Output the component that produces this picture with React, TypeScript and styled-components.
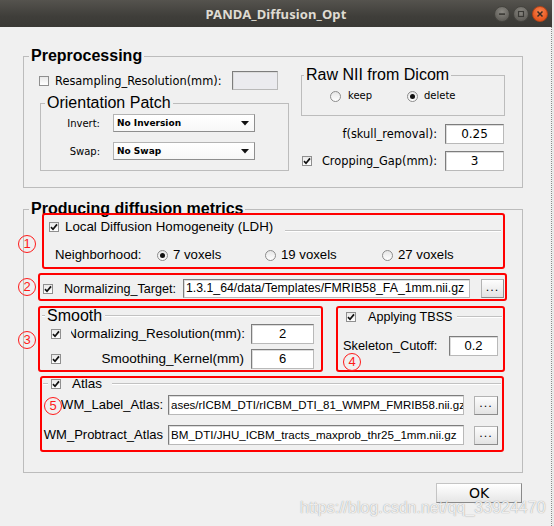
import React from "react";
import styled, { createGlobalStyle } from "styled-components";

const GlobalStyle = createGlobalStyle`
  html, body {
    margin: 0;
    padding: 0;
    background: #f0f0f0;
  }
  body {
    font-family: "Liberation Sans", Arial, sans-serif;
    color: #000;
  }
`;

const Window = styled.div`
  position: relative;
  box-sizing: border-box;
  width: 554px;
  height: 526px;
  padding-right: 2px;
  display: flex;
  flex-direction: column;
  overflow: hidden;
  background: #e9e9e9;
`;

const TitleBar = styled.div`
  flex: none;
  height: 27px;
  display: grid;
  grid-template-columns: 1fr auto 1fr;
  align-items: center;
  background: linear-gradient(#55534e, #3f3e3a 60%, #3a3935);
`;

const Title = styled.div`
  font: bold 13px "Noto Sans", "DejaVu Sans", sans-serif;
  color: #dfdbd2;
  letter-spacing: 0.1px;
`;

const WinButtons = styled.div`
  justify-self: end;
  display: flex;
  gap: 3px;
  padding-right: 4px;
`;

const WinButton = styled.span<{ $close?: boolean }>`
  box-sizing: border-box;
  width: 16px;
  height: 16px;
  border-radius: 50%;
  display: flex;
  align-items: center;
  justify-content: center;
  border: 1px solid ${(p) => (p.$close ? "#b2441a" : "#45443f")};
  background: ${(p) =>
    p.$close
      ? "radial-gradient(circle at 50% 35%, #f88652, #e8571f 70%)"
      : "radial-gradient(circle at 50% 35%, #8b8983, #62605b 70%)"};
`;

const Body = styled.div`
  flex: 1;
  padding: 21px 0 0 23px;
  background: #f0f0f0;
  border-right: 1px dotted #8a8a8a;
`;

const GroupBox = styled.fieldset<{ $w: number; $mt?: number; $ml?: number }>`
  box-sizing: border-box;
  width: ${(p) => p.$w}px;
  min-width: 0;
  margin: ${(p) => p.$mt ?? 0}px 0 0 ${(p) => p.$ml ?? 0}px;
  padding: 0;
  border: 1px solid #bcbcbc;
`;

const GroupTitle = styled.legend<{ $bold?: boolean; $indent: number }>`
  margin-left: ${(p) => p.$indent}px;
  padding: 0 2px;
  font-family: "Liberation Sans", Arial, sans-serif;
  font-size: 16px;
  font-weight: ${(p) => (p.$bold ? "bold" : "normal")};
  line-height: 16px;
  color: #000;
`;

const PreGrid = styled.div`
  display: grid;
  grid-template-columns: 250px 204px;
  column-gap: 12px;
  align-items: start;
  padding: 3px 0 16px 15px;
`;

const Column = styled.div<{ $top?: number }>`
  display: flex;
  flex-direction: column;
  padding-top: ${(p) => p.$top ?? 0}px;
`;

const ResampleRow = styled.div`
  display: flex;
  align-items: center;
  height: 19px;
  padding-right: 11px;
`;

const DvLabel = styled.span<{ $size?: number; $ml?: number; $auto?: boolean }>`
  font-family: "DejaVu Sans", sans-serif;
  font-size: ${(p) => p.$size ?? 11.4}px;
  line-height: 14px;
  white-space: nowrap;
  margin-left: ${(p) => (p.$auto ? "auto" : `${p.$ml ?? 0}px`)};
`;

const Label = styled.span<{ $size?: number; $ml?: number; $w?: number }>`
  font-size: ${(p) => p.$size ?? 13}px;
  line-height: 16px;
  white-space: nowrap;
  flex: none;
  margin-left: ${(p) => p.$ml ?? 0}px;
  ${(p) => (p.$w ? `width: ${p.$w}px;` : "")}
`;

const OrientGrid = styled.div`
  display: grid;
  grid-template-columns: 59px 142px;
  grid-auto-rows: 18px;
  column-gap: 13px;
  row-gap: 10px;
  align-items: center;
  padding: 3px 0 10px 0;
`;

const TinyLabel = styled.span`
  font: 10px "DejaVu Sans", sans-serif;
  text-align: right;
`;

const Dropdown = styled.div`
  box-sizing: border-box;
  height: 18px;
  display: flex;
  align-items: center;
  justify-content: space-between;
  padding: 0 5px 0 3px;
  background: linear-gradient(#ffffff, #f7f7f7);
  border: 1px solid #b4b4b4;
  border-right-color: #8e8e8e;
  border-bottom-color: #8e8e8e;
  font: bold 9px "DejaVu Sans", sans-serif;
`;

const RadioRow = styled.div`
  display: flex;
  align-items: center;
  height: 14px;
  padding: 6px 0 12px 28px;
`;

const RadioItem = styled.span<{ $w?: number; $gap?: number }>`
  display: flex;
  align-items: center;
  gap: ${(p) => p.$gap ?? 6}px;
  flex: none;
  ${(p) => (p.$w ? `width: ${p.$w}px;` : "")}
`;

const RadioCircle = styled.span<{ $on?: boolean }>`
  box-sizing: border-box;
  flex: none;
  width: 11px;
  height: 11px;
  border-radius: 50%;
  border: 1px solid #8c8c8c;
  background: linear-gradient(#e6e6e6, #ffffff);
  display: flex;
  align-items: center;
  justify-content: center;
  &::after {
    content: "";
    display: ${(p) => (p.$on ? "block" : "none")};
    width: 5px;
    height: 5px;
    border-radius: 50%;
    background: #111;
  }
`;

const FieldRow = styled.div<{ $mt: number }>`
  display: flex;
  align-items: center;
  gap: 8px;
  height: 20px;
  margin-top: ${(p) => p.$mt}px;
  padding: 0 1px;
`;

const TextBox = styled.div<{
  $w: number;
  $h?: number;
  $left?: boolean;
  $disabled?: boolean;
  $dv?: boolean;
  $size?: number;
  $ml?: number;
}>`
  box-sizing: border-box;
  flex: none;
  width: ${(p) => p.$w}px;
  height: ${(p) => p.$h ?? 20}px;
  margin-left: ${(p) => (p.$ml === undefined ? "0" : `${p.$ml}px`)};
  padding: 0 2px;
  overflow: hidden;
  white-space: nowrap;
  text-align: ${(p) => (p.$left ? "left" : "center")};
  line-height: ${(p) => (p.$h ?? 20) - 2}px;
  font-family: ${(p) => (p.$dv ? '"DejaVu Sans", sans-serif' : '"Liberation Sans", Arial, sans-serif')};
  font-size: ${(p) => p.$size ?? 13}px;
  background: ${(p) => (p.$disabled ? "#ebebef" : "#ffffff")};
  border: 1px solid #b9b9b9;
  border-top-color: #7d7d7d;
  border-left-color: #7d7d7d;
  box-shadow: inset 1px 1px 0 #dcdcdc;
`;

const Browse = styled.div<{ $w: number; $ml: number }>`
  box-sizing: border-box;
  flex: none;
  width: ${(p) => p.$w}px;
  height: 19px;
  margin-left: ${(p) => p.$ml}px;
  display: flex;
  align-items: center;
  justify-content: center;
  padding-bottom: 3px;
  background: linear-gradient(#fdfdfd, #e3e3e3);
  border: 1px solid #b3b3b3;
  border-right-color: #8c8c8c;
  border-bottom-color: #8c8c8c;
  font: 11px "DejaVu Sans", sans-serif;
  letter-spacing: 1px;
`;

const Metrics = styled.div`
  display: flex;
  flex-direction: column;
  padding-bottom: 20px;
`;

const Callout = styled.div<{ $left?: number; $width: number; $mt: number }>`
  position: relative;
  box-sizing: border-box;
  flex: none;
  width: ${(p) => p.$width}px;
  margin: ${(p) => p.$mt}px 0 0 ${(p) => p.$left ?? 0}px;
  border: 2px solid #ff0000;
  border-radius: 3px;
`;

const Badge = styled.span<{ $x: number; $y: number }>`
  position: absolute;
  left: ${(p) => p.$x}px;
  top: ${(p) => p.$y}px;
  box-sizing: border-box;
  width: 18px;
  height: 18px;
  border: 1.3px solid #ff1a1a;
  border-radius: 50%;
  color: #ff1a1a;
  font: 13px/16px "Liberation Sans", Arial, sans-serif;
  text-align: center;
`;

const Head = styled.div<{ $h: number; $pad?: number; $mt?: number }>`
  display: flex;
  align-items: center;
  height: ${(p) => p.$h}px;
  padding-left: ${(p) => p.$pad ?? 0}px;
  margin-top: ${(p) => p.$mt ?? 0}px;
`;

const Rule = styled.span<{ $ml: number; $mr: number; $top?: number; $w?: number }>`
  flex: ${(p) => (p.$w ? "none" : "1")};
  ${(p) => (p.$w ? `width: ${p.$w}px;` : "")}
  height: 0;
  margin-left: ${(p) => p.$ml}px;
  margin-right: ${(p) => p.$mr}px;
  ${(p) => (p.$top !== undefined ? `align-self: flex-start; margin-top: ${p.$top}px;` : "")}
  border-top: 1px solid #c2c2c2;
  border-bottom: 1px solid #ffffff;
`;

const Row = styled.div<{ $h: number; $mt?: number; $pad?: number }>`
  display: flex;
  align-items: center;
  height: ${(p) => p.$h}px;
  margin-top: ${(p) => p.$mt ?? 0}px;
  padding-left: ${(p) => p.$pad ?? 0}px;
`;

const PairRow = styled.div`
  display: flex;
  margin-top: 5px;
`;

const ClipLabel = styled.span<{ $w: number; $ml: number }>`
  flex: none;
  width: ${(p) => p.$w}px;
  margin-left: ${(p) => p.$ml}px;
  display: flex;
  justify-content: flex-end;
  overflow: hidden;
  white-space: nowrap;
  font-size: 13.5px;
  line-height: 16px;
`;

const RightLabel = styled.span<{ $w: number }>`
  flex: none;
  box-sizing: border-box;
  width: ${(p) => p.$w}px;
  padding-right: 5px;
  text-align: right;
  white-space: nowrap;
  font-size: 13px;
  line-height: 16px;
`;

const Footer = styled.div`
  width: 500px;
  display: flex;
  justify-content: flex-end;
  margin-top: 10px;
`;

const OkButton = styled.div`
  box-sizing: border-box;
  width: 86px;
  height: 20px;
  margin-right: 1px;
  display: flex;
  align-items: center;
  justify-content: center;
  background: linear-gradient(#ffffff, #e6e6e6);
  border: 1px solid #c4c4c4;
  border-right-color: #8a8a8a;
  border-bottom-color: #8a8a8a;
  font: 14px "DejaVu Sans", sans-serif;
`;

const Watermark = styled.div`
  position: absolute;
  left: 300px;
  top: 500px;
  font: 16px/16px "Liberation Sans", Arial, sans-serif;
  color: rgba(255, 255, 255, 0.85);
  text-shadow: 0 0 1px rgba(90, 90, 90, 0.7);
  white-space: nowrap;
  pointer-events: none;
`;

function CheckBox({ on }: { on?: boolean }) {
  return (
    <CheckFrame>
      {on && (
        <svg width="8" height="8" viewBox="0 0 8 8">
          <path d="M1 4.2 L3 6.3 L7 1.4" fill="none" stroke="#111" strokeWidth="1.7" />
        </svg>
      )}
    </CheckFrame>
  );
}

const CheckFrame = styled.span`
  box-sizing: border-box;
  flex: none;
  width: 10px;
  height: 10px;
  display: flex;
  align-items: center;
  justify-content: center;
  border: 1px solid #8f8f8f;
  background: linear-gradient(#e9e9e9, #ffffff);
`;

function Caret() {
  return (
    <svg width="8" height="5" viewBox="0 0 8 5">
      <path d="M0 0 H8 L4 4.5 Z" fill="#111" />
    </svg>
  );
}

export default function App() {
  return (
    <>
      <GlobalStyle />
      <Window>
        <TitleBar>
          <span />
          <Title>PANDA_Diffusion_Opt</Title>
          <WinButtons>
            <WinButton>
              <svg width="8" height="8" viewBox="0 0 8 8">
                <rect x="1" y="3.3" width="6" height="1.6" fill="#3a3935" />
              </svg>
            </WinButton>
            <WinButton>
              <svg width="8" height="8" viewBox="0 0 8 8">
                <rect x="1.5" y="1.5" width="5" height="5" fill="none" stroke="#3a3935" strokeWidth="1.2" />
              </svg>
            </WinButton>
            <WinButton $close>
              <svg width="8" height="8" viewBox="0 0 8 8">
                <path d="M1.5 1.5 L6.5 6.5 M6.5 1.5 L1.5 6.5" stroke="#3a2a22" strokeWidth="1.5" />
              </svg>
            </WinButton>
          </WinButtons>
        </TitleBar>

        <Body>
          <GroupBox $w={500}>
            <GroupTitle $bold $indent={5}>Preprocessing</GroupTitle>
            <PreGrid>
              <Column $top={4}>
                <ResampleRow>
                  <CheckBox />
                  <DvLabel $ml={6}>Resampling_Resolution(mm):</DvLabel>
                  <TextBox $w={46} $h={19} $disabled $ml={10} />
                </ResampleRow>
                <GroupBox $w={249} $mt={5} $ml={1}>
                  <GroupTitle $indent={4}>Orientation Patch</GroupTitle>
                  <OrientGrid>
                    <TinyLabel>Invert:</TinyLabel>
                    <Dropdown>
                      No Inversion
                      <Caret />
                    </Dropdown>
                    <TinyLabel>Swap:</TinyLabel>
                    <Dropdown>
                      No Swap
                      <Caret />
                    </Dropdown>
                  </OrientGrid>
                </GroupBox>
              </Column>

              <Column>
                <GroupBox $w={204}>
                  <GroupTitle $indent={2}>Raw NII from Dicom</GroupTitle>
                  <RadioRow>
                    <RadioItem $w={77} $gap={7}>
                      <RadioCircle />
                      <DvLabel $size={10}>keep</DvLabel>
                    </RadioItem>
                    <RadioItem $gap={6}>
                      <RadioCircle $on />
                      <DvLabel $size={10}>delete</DvLabel>
                    </RadioItem>
                  </RadioRow>
                </GroupBox>
                <FieldRow $mt={8}>
                  <DvLabel $auto>f(skull_removal):</DvLabel>
                  <TextBox $w={59} $dv $size={12}>0.25</TextBox>
                </FieldRow>
                <FieldRow $mt={7}>
                  <CheckBox on />
                  <DvLabel $auto>Cropping_Gap(mm):</DvLabel>
                  <TextBox $w={59} $dv $size={12}>3</TextBox>
                </FieldRow>
              </Column>
            </PreGrid>
          </GroupBox>

          <GroupBox $w={500} $mt={13}>
            <GroupTitle $bold $indent={5}>Producing diffusion metrics</GroupTitle>
            <Metrics>
              <Callout $left={18} $width={463} $mt={-4}>
                <Badge $x={-26} $y={20}>1</Badge>
                <Head $h={16} $pad={5} $mt={4}>
                  <CheckBox on />
                  <Label $ml={6} $size={13.3}>Local Diffusion Homogeneity (LDH)</Label>
                  <Rule $ml={12} $mr={2} $top={11} />
                </Head>
                <Row $h={16} $mt={12} $pad={11} style={{ paddingBottom: 4 }}>
                  <Label $w={102} $size={13.2}>Neighborhood:</Label>
                  <RadioItem $w={108} $gap={5}>
                    <RadioCircle $on />
                    <Label $size={13.2}>7 voxels</Label>
                  </RadioItem>
                  <RadioItem $w={117} $gap={5}>
                    <RadioCircle />
                    <Label $size={13.2}>19 voxels</Label>
                  </RadioItem>
                  <RadioItem $gap={5}>
                    <RadioCircle />
                    <Label $size={13.2}>27 voxels</Label>
                  </RadioItem>
                </Row>
              </Callout>

              <Callout $left={14} $width={469} $mt={4}>
                <Badge $x={-22} $y={3}>2</Badge>
                <Row $h={19} $pad={3} style={{ marginTop: 4, marginBottom: 1 }}>
                  <CheckBox on />
                  <Label $ml={11} $w={119} $size={12.6}>Normalizing_Target:</Label>
                  <TextBox $w={287} $h={19} $left $size={12.3}>
                    1.3.1_64/data/Templates/FMRIB58_FA_1mm.nii.gz
                  </TextBox>
                  <Browse $w={23} $ml={11}>...</Browse>
                </Row>
              </Callout>

              <PairRow>
                <Callout $left={14} $width={285} $mt={0}>
                  <Badge $x={-22} $y={23}>3</Badge>
                  <Head $h={16}>
                    <Rule $ml={2} $mr={0} $w={3} />
                    <Label $size={16} style={{ padding: "0 2px" }}>Smooth</Label>
                    <Rule $ml={1} $mr={1} />
                  </Head>
                  <Row $h={20} $pad={11}>
                    <CheckBox on />
                    <ClipLabel $w={174} $ml={10}>Normalizing_Resolution(mm):</ClipLabel>
                    <TextBox $w={63} $ml={6}>2</TextBox>
                  </Row>
                  <Row $h={20} $mt={5} $pad={11} style={{ paddingBottom: 1 }}>
                    <CheckBox on />
                    <ClipLabel $w={173} $ml={10}>Smoothing_Kernel(mm)</ClipLabel>
                    <TextBox $w={63} $ml={7}>6</TextBox>
                  </Row>
                </Callout>

                <Callout $left={13} $width={169} $mt={0}>
                  <Badge $x={5} $y={45}>4</Badge>
                  <Head $h={18} $pad={8}>
                    <CheckBox on />
                    <Label $ml={12} $size={12.6}>Applying TBSS</Label>
                    <Rule $ml={5} $mr={1} $top={8} />
                  </Head>
                  <Row $h={20} $mt={10} $pad={5}>
                    <Label $w={106} $size={12.8}>Skeleton_Cutoff:</Label>
                    <TextBox $w={49}>0.2</TextBox>
                  </Row>
                </Callout>
              </PairRow>

              <Callout $left={16} $width={464} $mt={4}>
                <Badge $x={2} $y={19}>5</Badge>
                <Head $h={12}>
                  <Rule $ml={1} $mr={0} $w={5} />
                  <span style={{ width: 3 }} />
                  <CheckBox on />
                  <Label $ml={11} $size={13.5}>Atlas</Label>
                  <Rule $ml={10} $mr={1} />
                </Head>
                <Row $h={20} $mt={5}>
                  <RightLabel $w={126}>WM_Label_Atlas:</RightLabel>
                  <TextBox $w={296} $left $size={11.5}>
                    ases/rICBM_DTI/rICBM_DTI_81_WMPM_FMRIB58.nii.gz
                  </TextBox>
                  <Browse $w={24} $ml={10}>...</Browse>
                </Row>
                <Row $h={20} $mt={10} style={{ paddingBottom: 5 }}>
                  <RightLabel $w={126}>WM_Probtract_Atlas</RightLabel>
                  <TextBox $w={296} $left $size={11.6}>
                    BM_DTI/JHU_ICBM_tracts_maxprob_thr25_1mm.nii.gz
                  </TextBox>
                  <Browse $w={24} $ml={10}>...</Browse>
                </Row>
              </Callout>
            </Metrics>
          </GroupBox>

          <Footer>
            <OkButton>OK</OkButton>
          </Footer>
        </Body>

        <Watermark>https://blog.csdn.net/qq_33924470</Watermark>
      </Window>
    </>
  );
}
